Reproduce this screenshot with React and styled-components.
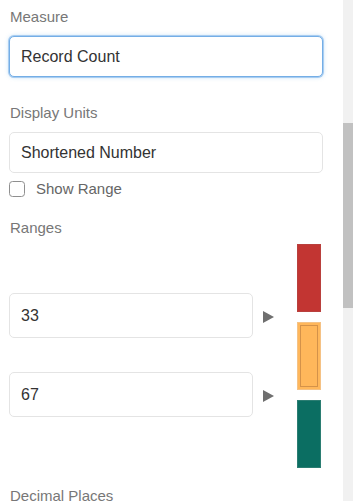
import React from "react";
import styled, { createGlobalStyle } from "styled-components";

const GlobalStyle = createGlobalStyle`
  html, body {
    margin: 0;
    padding: 0;
    background: #ffffff;
  }
  body {
    font-family: "Liberation Sans", Arial, sans-serif;
  }
`;

const Screen = styled.div`
  display: flex;
  width: 353px;
  height: 501px;
  overflow: hidden;
`;

const Panel = styled.div`
  flex: 1;
  padding: 8px 20px 0 9px;
`;

const ScrollTrack = styled.div`
  flex-shrink: 0;
  width: 10px;
  background: #f1f1f1;
  display: flex;
  flex-direction: column;
`;

const ScrollThumb = styled.div`
  margin-top: 123px;
  height: 185px;
  background: #c1c1c1;
`;

const Label = styled.label`
  display: block;
  margin: ${(p) => p.$top || 0}px 0 ${(p) => p.$bottom || 0}px 1px;
  font-size: 15px;
  line-height: 18px;
  color: #777777;
  white-space: nowrap;
`;

const TextBox = styled.input`
  display: block;
  flex-shrink: 0;
  box-sizing: border-box;
  width: ${(p) => p.$width || "100%"};
  height: ${(p) => p.$height || 41}px;
  margin: 0;
  padding: 0 11px;
  border: 1px solid ${(p) => (p.$focused ? "#74aee6" : "#e4e4e4")};
  border-radius: 5px;
  box-shadow: ${(p) =>
    p.$focused ? "0 0 0 1px #a9cdf1, 0 0 4px rgba(102,175,233,0.5)" : "none"};
  font-family: inherit;
  font-size: 16px;
  color: #333333;
  background: #ffffff;
  outline: none;
`;

const CheckRow = styled.div`
  display: flex;
  align-items: center;
  gap: 11px;
  margin-top: 7px;
`;

const CheckBox = styled.span`
  box-sizing: border-box;
  width: 16px;
  height: 16px;
  border: 1.5px solid #8f8f8f;
  border-radius: 3.5px;
  background: #ffffff;
`;

const CheckText = styled.span`
  font-size: 15px;
  line-height: 18px;
  color: #666666;
`;

const RangeArea = styled.div`
  display: flex;
  align-items: flex-start;
  gap: 23px;
`;

const RangeInputs = styled.div`
  display: flex;
  flex-direction: column;
  gap: 34px;
  padding-top: 49px;
`;

const RangeRow = styled.div`
  display: flex;
  align-items: center;
  gap: 10px;
`;

const Arrow = styled.svg`
  width: 11px;
  height: 12px;
  margin-top: 3px;
  fill: #6f6f6f;
`;

const Swatches = styled.div`
  display: flex;
  flex-direction: column;
  gap: 10px;
`;

const Swatch = styled.div`
  box-sizing: border-box;
  width: 24px;
  height: 68px;
  background: ${(p) => p.$color};
  border: 1px solid ${(p) => p.$edge};
  padding: 2px;
  display: flex;
`;

const SelectedInner = styled.div`
  flex: 1;
  border: 1.5px solid #d4924a;
`;

const ranges = [33, 67];

const colors = [
  { color: "#c23532", edge: "#b9403d" },
  { color: "#ffb75b", edge: "#f5c285", selected: true },
  { color: "#0b6e62", edge: "#2b7d72" },
];

export default function App() {
  return (
    <>
      <GlobalStyle />
      <Screen>
        <Panel>
          <Label $bottom={10}>Measure</Label>
          <TextBox $focused defaultValue="Record Count" />

          <Label $top={27} $bottom={10}>Display Units</Label>
          <TextBox defaultValue="Shortened Number" />

          <CheckRow>
            <CheckBox />
            <CheckText>Show Range</CheckText>
          </CheckRow>

          <Label $top={21} $bottom={7}>Ranges</Label>
          <RangeArea>
            <RangeInputs>
              {ranges.map((r) => (
                <RangeRow key={r}>
                  <TextBox $width="244px" $height={45} defaultValue={r} />
                  <Arrow viewBox="0 0 11 12">
                    <polygon points="0,0 11,6 0,12" />
                  </Arrow>
                </RangeRow>
              ))}
            </RangeInputs>
            <Swatches>
              {colors.map((c) => (
                <Swatch key={c.color} $color={c.color} $edge={c.edge}>
                  {c.selected && <SelectedInner />}
                </Swatch>
              ))}
            </Swatches>
          </RangeArea>

          <Label $top={19}>Decimal Places</Label>
        </Panel>
        <ScrollTrack>
          <ScrollThumb />
        </ScrollTrack>
      </Screen>
    </>
  );
}
